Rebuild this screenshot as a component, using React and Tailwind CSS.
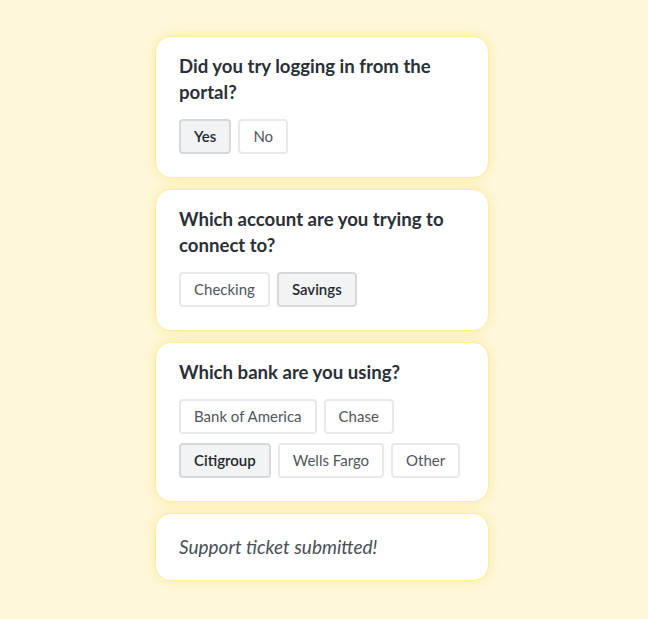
import { useState } from 'react';

const questions = [
  { id: 'portal', title: 'Did you try logging in from the portal?', options: ['Yes', 'No'], picked: 'Yes' },
  { id: 'account', title: 'Which account are you trying to connect to?', options: ['Checking', 'Savings'], picked: 'Savings' },
  { id: 'bank', title: 'Which bank are you using?', options: ['Bank of America', 'Chase', 'Citigroup', 'Wells Fargo', 'Other'], picked: 'Citigroup' },
];

const cardClass =
  'bg-white rounded-2xl border border-[#fcee9f] shadow-[0_0_12px_rgba(250,221,90,0.45)]';

const Question = ({ q, value, onPick }) => (
  <div className={`${cardClass} px-[23px] pt-4 pb-[23px]`}>
    <h2 className="text-[18.6px] leading-[26px] font-bold text-[#2b3038] mb-[14px] pr-4">{q.title}</h2>
    <div className="flex flex-wrap gap-x-[7px] gap-y-[9px]">
      {q.options.map((opt) => {
        const active = value === opt;
        return (
          <button
            key={opt}
            onClick={() => onPick(opt)}
            className={
              active
                ? 'h-[35px] px-[13px] rounded-[4px] border-2 border-[#d6d9dc] bg-[#f2f3f4] text-[#24282e] text-[15px] font-semibold'
                : 'h-[35px] px-[13px] rounded-[4px] border-2 border-[#e8e9eb] bg-white text-[#50565e] text-[15px]'
            }
          >
            {opt}
          </button>
        );
      })}
    </div>
  </div>
);

const App = () => {
  const [answers, setAnswers] = useState(
    Object.fromEntries(questions.map((q) => [q.id, q.picked]))
  );

  return (
    <div className="min-h-[619px] bg-[#fef7da] pt-9 pb-9 pl-[155px]" style={{ fontFamily: 'Lato, "Open Sans", sans-serif' }}>
      <div className="w-[334px] flex flex-col gap-[11px]">
        {questions.map((q) => (
          <Question
            key={q.id}
            q={q}
            value={answers[q.id]}
            onPick={(v) => setAnswers({ ...answers, [q.id]: v })}
          />
        ))}
        <div className={`${cardClass} px-[23px] py-5`}>
          <p className="italic text-[19px] leading-[26px] text-[#4a4f57]">Support ticket submitted!</p>
        </div>
      </div>
    </div>
  );
};

export default App;
